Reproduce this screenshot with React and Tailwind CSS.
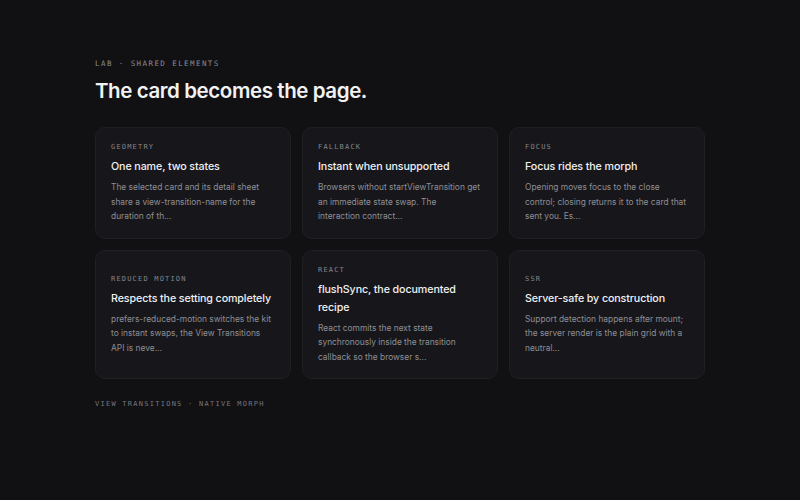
import React from "react";

const cards = [
  {
    tag: "Geometry",
    title: "One name, two states",
    body: "The selected card and its detail sheet share a view-transition-name for the duration of th...",
  },
  {
    tag: "Fallback",
    title: "Instant when unsupported",
    body: "Browsers without startViewTransition get an immediate state swap. The interaction contract...",
  },
  {
    tag: "Focus",
    title: "Focus rides the morph",
    body: "Opening moves focus to the close control; closing returns it to the card that sent you. Es...",
  },
  {
    tag: "Reduced motion",
    title: "Respects the setting completely",
    body: "prefers-reduced-motion switches the kit to instant swaps, the View Transitions API is neve...",
  },
  {
    tag: "React",
    title: "flushSync, the documented recipe",
    body: "React commits the next state synchronously inside the transition callback so the browser s...",
  },
  {
    tag: "SSR",
    title: "Server-safe by construction",
    body: "Support detection happens after mount; the server render is the plain grid with a neutral...",
  },
];

const mono = "font-['DejaVu_Sans_Mono','Liberation_Mono',monospace]";

const App = () => {
  return (
    <div className="min-h-[500px] w-full bg-[#111114] font-['Inter',sans-serif] text-white">
      <div className="px-[95px] pt-[58px]">
        {/* header */}
        <p className={`${mono} text-[7.5px] uppercase leading-[12px] tracking-[0.19em] text-[#8a8a90]`}>
          Lab · Shared elements
        </p>
        <h1 className="mt-[8px] text-[20.5px] font-semibold leading-[26px] tracking-[-0.02em] text-[#f2f2f3]">
          The card becomes the page.
        </h1>

        {/* cards */}
        <div className="mt-[23px] grid grid-cols-3 gap-x-[11px] gap-y-[11px]">
          {cards.map((c) => (
            <div
              key={c.tag}
              className="flex flex-col justify-center rounded-[10px] border border-[#1f1f24] bg-[#17171b] px-[15px] py-[14px]"
            >
              <p className={`${mono} text-[7px] uppercase leading-[10px] tracking-[0.17em] text-[#85858c]`}>
                {c.tag}
              </p>
              <h2 className="mt-[6px] text-[10.7px] font-medium leading-[18px] tracking-[-0.01em] text-[#f0f0f2]">
                {c.title}
              </h2>
              <p className="mr-[2px] mt-[4px] text-[8.4px] leading-[14.5px] text-[#8e8e95]">
                {c.body}
              </p>
            </div>
          ))}
        </div>

        {/* footer */}
        <p className={`${mono} mt-[19px] text-[7px] uppercase leading-[12px] tracking-[0.18em] text-[#75757c]`}>
          View Transitions · Native morph
        </p>
      </div>
    </div>
  );
};

export default App;
